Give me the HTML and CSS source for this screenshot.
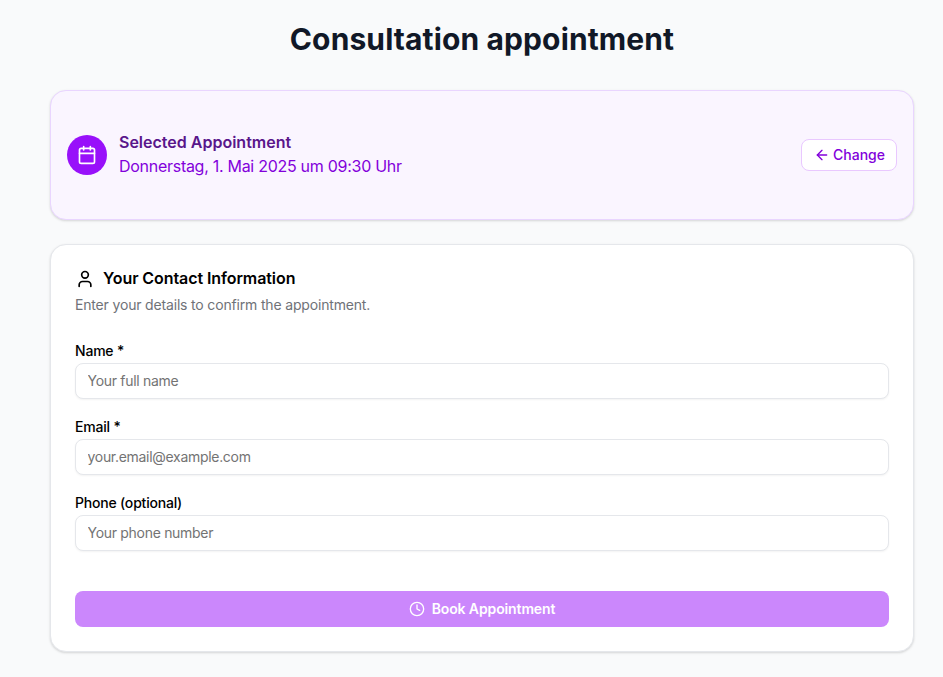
FILE: index.html
```html
<!DOCTYPE html>
<html lang="en">
<head>
<meta charset="utf-8">
<title>Consultation appointment</title>
<link rel="stylesheet" href="styles.css">
</head>
<body>
<main class="page">
  <h1 class="title">Consultation appointment</h1>
  <section class="selected">
    <div class="selected-info">
      <div class="badge">
        <svg width="20" height="20" viewBox="0 0 24 24" fill="none" stroke="currentColor" stroke-width="2" stroke-linecap="round" stroke-linejoin="round"><path d="M8 2v4"/><path d="M16 2v4"/><rect x="3" y="4" width="18" height="18" rx="2"/><path d="M3 10h18"/></svg>
      </div>
      <div class="selected-text">
        <h2 class="selected-title">Selected Appointment</h2>
        <p class="selected-date">Donnerstag, 1. Mai 2025 um 09:30 Uhr</p>
      </div>
    </div>
    <button class="change" type="button">
      <svg width="16" height="16" viewBox="0 0 24 24" fill="none" stroke="currentColor" stroke-width="2" stroke-linecap="round" stroke-linejoin="round"><path d="m12 19-7-7 7-7"/><path d="M19 12H5"/></svg>
      <span>Change</span>
    </button>
  </section>
  <section class="contact">
    <h2 class="contact-title">
      <svg width="20" height="20" viewBox="0 0 24 24" fill="none" stroke="currentColor" stroke-width="2" stroke-linecap="round" stroke-linejoin="round"><path d="M19 21v-2a4 4 0 0 0-4-4H9a4 4 0 0 0-4 4v2"/><circle cx="12" cy="7" r="4"/></svg>
      <span class="contact-title-text">Your Contact Information</span>
    </h2>
    <p class="contact-sub">Enter your details to confirm the appointment.</p>
    <form class="form">
      <div class="field">
        <label class="label" for="name">Name *</label>
        <input class="input" id="name" type="text" placeholder="Your full name">
      </div>
      <div class="field">
        <label class="label" for="email">Email *</label>
        <input class="input" id="email" type="email" placeholder="your.email@example.com">
      </div>
      <div class="field">
        <label class="label" for="phone">Phone (optional)</label>
        <input class="input" id="phone" type="tel" placeholder="Your phone number">
      </div>
      <button class="book" type="button">
        <svg width="16" height="16" viewBox="0 0 24 24" fill="none" stroke="currentColor" stroke-width="2" stroke-linecap="round" stroke-linejoin="round"><circle cx="12" cy="12" r="10"/><path d="M12 6v6l4 2"/></svg>
        <span>Book Appointment</span>
      </button>
    </form>
  </section>
</main>
</body>
</html>
```
FILE: styles.css
```css
* { box-sizing: border-box; }
html, body { margin: 0; padding: 0; }
body {
  background: #f9fafb;
  font-family: Inter, "Liberation Sans", sans-serif;
  color: #000;
  height: 677px;
  overflow: hidden;
}
.page {
  width: 864px;
  margin-left: 50px;
  padding-top: 20px;
}
.title {
  margin: 0 0 32px;
  height: 38px;
  font-size: 30px;
  line-height: 38px;
  font-weight: 700;
  letter-spacing: 0.12px;
  text-align: center;
  color: #111827;
}
.selected {
  height: 130px;
  display: flex;
  align-items: center;
  justify-content: space-between;
  padding: 0 16px;
  background: #faf5ff;
  border: 1px solid #e9d5ff;
  border-radius: 16px;
  box-shadow: 0 1px 3px rgba(0,0,0,.1), 0 1px 2px rgba(0,0,0,.06);
  margin-bottom: 24px;
}
.selected-info { display: flex; align-items: center; gap: 12px; }
.selected-text { margin-bottom: 2px; }
.badge {
  width: 40px;
  height: 40px;
  border-radius: 50%;
  background: #9810fa;
  color: #fff;
  display: flex;
  align-items: center;
  justify-content: center;
}
.selected-title {
  margin: 0;
  font-size: 16px;
  line-height: 24px;
  font-weight: 600;
  color: #59168b;
}
.selected-date {
  margin: 0;
  font-size: 16px;
  line-height: 24px;
  letter-spacing: -0.28px;
  color: #8200db;
}
.change {
  height: 32px;
  width: 96px;
  display: flex;
  align-items: center;
  justify-content: center;
  gap: 3px;
  padding: 0 0 0 1px;
  background: #fff;
  border: 1px solid #e9c8ff;
  border-radius: 8px;
  font: 500 14px/20px Inter, "Liberation Sans", sans-serif;
  color: #8200db;
}
.contact {
  height: 408px;
  padding: 24px;
  background: #fff;
  border: 1px solid #e5e7eb;
  border-radius: 16px;
  box-shadow: 0 1px 3px rgba(0,0,0,.1), 0 1px 2px rgba(0,0,0,.06);
}
.contact-title {
  margin: 0;
  height: 20px;
  display: flex;
  align-items: center;
  gap: 8px;
  font-size: 16px;
  font-weight: 600;
  letter-spacing: -0.08px;
}
.contact-title-text { line-height: 18px; padding-bottom: 2px; }
.contact-sub {
  margin: 6px 0 0;
  font-size: 14px;
  line-height: 20px;
  letter-spacing: -0.17px;
  color: #6f7278;
}
.form { margin-top: 26px; display: flex; flex-direction: column; gap: 18px; }
.field { display: flex; flex-direction: column; gap: 2px; }
.label { font-size: 14px; line-height: 20px; font-weight: 450; height: 20px; letter-spacing: -0.2px; }
.input {
  height: 36px;
  padding: 0 12px 2px 11.5px;
  border: 1px solid #e5e7eb;
  border-radius: 8px;
  background: #fff;
  box-shadow: 0 1px 2px rgba(0,0,0,.05);
  font: 400 14px/20px Inter, "Liberation Sans", sans-serif;
  letter-spacing: -0.3px;
  outline: none;
}
.input::placeholder { color: #737373; opacity: 1; }
.book {
  margin-top: 22px;
  height: 36px;
  display: flex;
  align-items: center;
  justify-content: center;
  gap: 7px;
  padding: 0;
  border: 0;
  border-radius: 8px;
  background: #cb87fc;
  color: #fff;
  font: 600 14px/20px Inter, "Liberation Sans", sans-serif;
  letter-spacing: -0.12px;
}
```
